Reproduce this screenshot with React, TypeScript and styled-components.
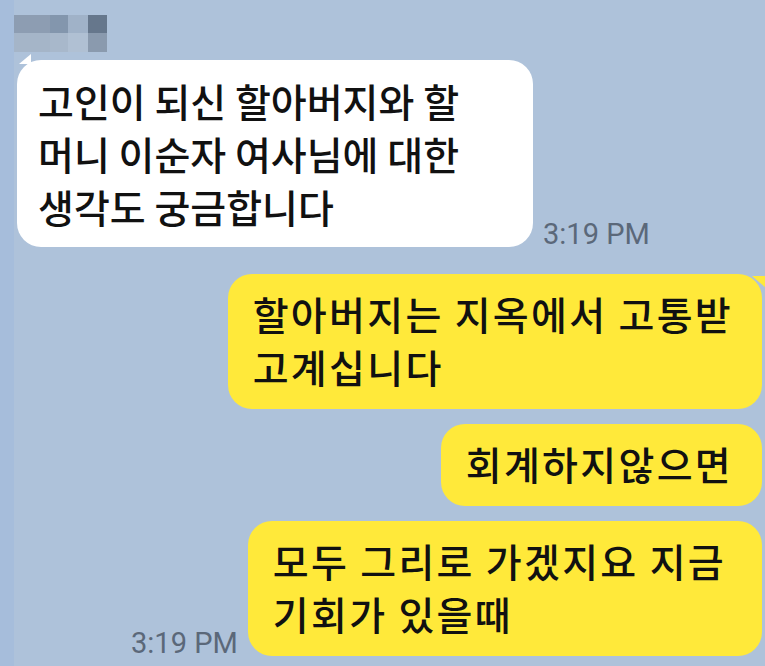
import React from "react";
import styled, { createGlobalStyle } from "styled-components";

const GlobalStyle = createGlobalStyle`
  html, body {
    margin: 0;
    padding: 0;
  }
  body {
    background: linear-gradient(to right, #a6bddb 0 14px, #aec2da 14px);
    font-family: "Noto Sans CJK KR", "Noto Sans", sans-serif;
  }
`;

type Side = "in" | "out";

interface Message {
  id: number;
  side: Side;
  lines: string[];
  time?: string;
}

const messages: Message[] = [
  {
    id: 1,
    side: "in",
    lines: ["고인이 되신 할아버지와 할", "머니 이순자 여사님에 대한", "생각도 궁금합니다"],
    time: "3:19 PM",
  },
  { id: 2, side: "out", lines: ["할아버지는 지옥에서 고통받", "고계십니다"] },
  { id: 3, side: "out", lines: ["회계하지않으면"] },
  {
    id: 4,
    side: "out",
    lines: ["모두 그리로 가겠지요 지금", "기회가 있을때"],
    time: "3:19 PM",
  },
];

// blurred sender name, as it appears in the capture
const mosaic = [
  "#8d9db2", "#8396ad", "#a0b2c8", "#66778c",
  "#a5b5c8", "#a8b8cb", "#b0c0d3", "#8a9aae",
];

const App: React.FC = () => {
  return (
    <>
      <GlobalStyle />
      <ChatScreen>
        <NameMosaic>
          {mosaic.map((c, i) => (
            <MosaicCell key={i} $color={c} />
          ))}
        </NameMosaic>
        {messages.map((m, i) => {
          const first = i === 0 || messages[i - 1].side !== m.side;
          return (
            <Row key={m.id} $side={m.side} $first={first}>
              <Bubble $side={m.side} $tail={first} $timed={!!m.time}>
                {m.lines.map((l) => (
                  <Line key={l}>{l}</Line>
                ))}
              </Bubble>
              {m.time && <Time>{m.time}</Time>}
            </Row>
          );
        })}
      </ChatScreen>
    </>
  );
};

const ChatScreen = styled.div`
  width: 765px;
  height: 666px;
  overflow: hidden;
  box-sizing: border-box;
  padding: 15px 3px 0 0;
  display: flex;
  flex-direction: column;
`;

const NameMosaic = styled.div`
  margin-left: 14px;
  display: grid;
  grid-template-columns: 36px 18px 20px 19px;
  grid-template-rows: 18px 19px;
  width: max-content;
`;

const MosaicCell = styled.div<{ $color: string }>`
  background: ${(p) => p.$color};
  filter: blur(0.4px);
`;

const Row = styled.div<{ $side: Side; $first: boolean }>`
  display: flex;
  align-items: flex-end;
  gap: 10px;
  flex-direction: ${(p) => (p.$side === "in" ? "row" : "row-reverse")};
  margin-top: ${(p) => (p.$first ? (p.$side === "in" ? "8px" : "27px") : "15px")};
  margin-left: ${(p) => (p.$side === "in" ? "17px" : "0")};
`;

const Bubble = styled.div<{ $side: Side; $tail: boolean; $timed: boolean }>`
  position: relative;
  box-sizing: border-box;
  background: ${(p) => (p.$side === "in" ? "#ffffff" : "#ffe93a")};
  color: #111111;
  border-radius: 24px;
  padding: ${(p) =>
    p.$side === "in"
      ? "14px 74px 14px 21px"
      : `13px ${p.$timed ? "36px" : "29px"} 16px 25px`};
  font-size: 39px;
  font-weight: 500;
  line-height: 53px;
  letter-spacing: ${(p) => (p.$side === "in" ? "0" : "2.3px")};

  &::before {
    content: "";
    display: ${(p) => (p.$tail ? "block" : "none")};
    position: absolute;
    width: 0;
    height: 0;
    ${(p) =>
      p.$side === "in"
        ? "left: 2px; top: -6px; border-bottom: 10px solid #ffffff; border-left: 12px solid transparent;"
        : "right: -4px; top: 2px; border-top: 12px solid #ffe93a; border-left: 14px solid transparent;"}
  }
`;

const Line = styled.div`
  white-space: nowrap;
`;

const Time = styled.span`
  font-family: Roboto, "Liberation Sans", sans-serif;
  font-size: 29px;
  line-height: 29px;
  color: #5b6879;
  margin-bottom: -2px;
`;

export default App;
